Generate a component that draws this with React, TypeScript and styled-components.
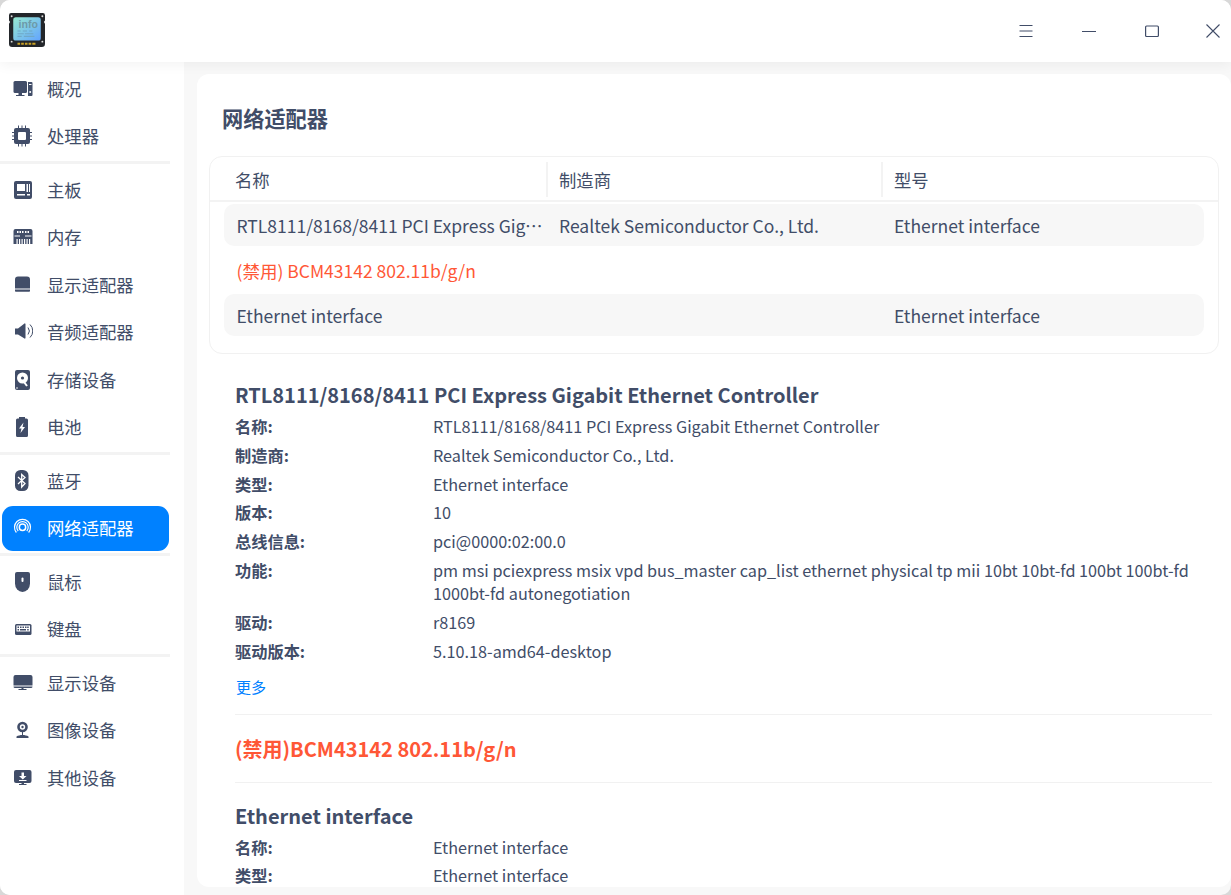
import React from 'react'
import styled, { createGlobalStyle } from 'styled-components'

const INK = '#414d68'
const BLUE = '#0081ff'
const RED = '#ff5736'

const GlobalStyle = createGlobalStyle`
  html, body {
    margin: 0;
    padding: 0;
    background: #d8d8d8;
  }
  * {
    box-sizing: border-box;
  }
`

const Window = styled.div`
  width: 1231px;
  height: 895px;
  display: flex;
  flex-direction: column;
  overflow: hidden;
  border-radius: 10px;
  background: #f8f8f8;
  color: ${INK};
  font-family: 'Noto Sans CJK SC', 'Noto Sans', sans-serif;
`

const TitleBar = styled.header`
  flex: 0 0 62px;
  display: flex;
  align-items: center;
  justify-content: space-between;
  padding: 0 0 0 9px;
  background: #fff;
  position: relative;
  z-index: 2;
  box-shadow: 0 3px 12px rgba(0, 0, 0, 0.05);
`

const LogoSvg = styled.svg`
  display: block;
  width: 36px;
  height: 34px;
  margin-bottom: 2px;
`

const WindowButtons = styled.div`
  display: flex;
  align-items: center;
  gap: 27px;
`

const WindowButton = styled.button`
  width: 36px;
  height: 50px;
  padding: 0;
  border: 0;
  background: none;
  color: ${INK};
  display: flex;
  align-items: center;
  justify-content: center;
`

const CloseButton = styled(WindowButton)`
  margin-left: -2px;
`

const Body = styled.div`
  flex: 1;
  min-height: 0;
  display: flex;
`

const Sidebar = styled.nav`
  flex: 0 0 184px;
  display: flex;
  flex-direction: column;
  background: #fff;
  padding-top: 2.75px;
`

const NavDivider = styled.div`
  flex: none;
  width: 170px;
  height: 2.5px;
  margin: 1.25px 0 2.25px;
  background: #f3f3f3;
`

const NavItem = styled.div<{ $active?: boolean }>`
  flex: none;
  height: 45px;
  margin: 1.25px 15px 1.25px 2px;
  padding-left: 9px;
  display: flex;
  align-items: center;
  gap: 14px;
  border-radius: 11px;
  font-size: 17.33px;
  line-height: 24px;
  background: ${({ $active }) => ($active ? BLUE : 'transparent')};
  color: ${({ $active }) => ($active ? '#fff' : INK)};
`

const IconSvg = styled.svg`
  flex: none;
  width: 22px;
  height: 22px;
  display: block;
`

const Main = styled.main`
  flex: 1;
  min-width: 0;
  margin: 12px 0 8px 13px;
  background: #fff;
  border-radius: 12px;
  padding: 0 12px;
  overflow: hidden;
`

const PageTitle = styled.h1`
  margin: 0;
  padding: 28px 0 0 13px;
  height: 82px;
  font-size: 21.2px;
  line-height: 32px;
  font-weight: 700;
`

const TableCard = styled.section`
  height: 198px;
  border: 1.5px solid #f1f1f1;
  border-radius: 13px;
`

const HeaderRow = styled.div`
  height: 45px;
  display: grid;
  grid-template-columns: 324px 335px 1fr;
  padding: 5px 0 3px 14px;
  border-bottom: 2px solid #f3f3f3;
  font-size: 17.33px;
  line-height: 24px;
`

const HeaderCell = styled.div<{ $last?: boolean }>`
  padding-left: 11px;
  display: flex;
  align-items: center;
  border-right: 2px solid ${({ $last }) => ($last ? 'transparent' : '#f3f3f3')};
`

const TableRows = styled.div`
  display: flex;
  flex-direction: column;
  gap: 3px;
  padding: 2px 14px 0;
`

const TableRow = styled.div<{ $shaded?: boolean; $disabled?: boolean }>`
  height: 42px;
  padding-top: 2px;
  display: grid;
  grid-template-columns: 323px 335px 1fr;
  align-items: center;
  border-radius: 10px;
  font-size: 17.5px;
  line-height: 24px;
  background: ${({ $shaded }) => ($shaded ? '#f7f7f7' : 'transparent')};
  color: ${({ $disabled }) => ($disabled ? RED : INK)};
`

const TableCell = styled.div`
  padding: 0 2px 0 12px;
  white-space: nowrap;
  overflow: hidden;
  text-overflow: ellipsis;

  &:first-child {
    padding-left: 12.5px;
  }
`

const Details = styled.div`
  padding: 0 7px 0 26px;
`

const DeviceBlock = styled.section<{ $divided?: boolean }>`
  border-bottom: ${({ $divided }) => ($divided ? '1px solid #f1f1f1' : '0')};
`

const DeviceTitle = styled.h2<{ $disabled?: boolean }>`
  margin: 0;
  font-size: 20px;
  line-height: 30px;
  font-weight: 700;
  color: ${({ $disabled }) => ($disabled ? RED : INK)};
`

const FirstTitle = styled(DeviceTitle)`
  margin-top: 26px;
`

const PropertyList = styled.dl`
  margin: 5px 0 0;
  display: grid;
  grid-template-columns: 198px 1fr;
  row-gap: 5.8px;
  font-size: 16.23px;
  line-height: 23px;
`

const PropertyName = styled.dt`
  font-weight: 700;
`

const PropertyValue = styled.dd`
  margin: 0;
`

const MoreLink = styled.a`
  display: block;
  margin: 13px 0 0 1px;
  padding-bottom: 16px;
  font-size: 15px;
  line-height: 22px;
  color: ${BLUE};
`

const DisabledSection = styled(DeviceBlock)`
  padding: 19px 0 18px;
`

const LastSection = styled.section`
  padding-top: 18px;
`

const navGroups: { label: string; icon: React.ReactNode; active?: boolean }[][] = [
  [
    {
      label: '概况',
      icon: (
        <>
          <path d="M4 3h10.5a1.5 1.5 0 0 1 1.5 1.5v9a1.5 1.5 0 0 1-1.5 1.5H4a1.5 1.5 0 0 1-1.5-1.5v-9A1.5 1.5 0 0 1 4 3z" />
          <path d="M7.5 15H11v2h2.500v1H5v-1h2.500z" />
          <path d="M17 4h3.500a1 1 0 0 1 1 1v12a1 1 0 0 1-1 1H17z" />
          <rect x="18" y="6" width="2.5" height="1" fill="#fff" />
          <circle cx="19.2" cy="14" r="1" fill="#fff" />
        </>
      ),
    },
    {
      label: '处理器',
      icon: (
        <>
          <path d="M5 3h12a2 2 0 0 1 2 2v12a2 2 0 0 1-2 2H5a2 2 0 0 1-2-2V5a2 2 0 0 1 2-2z" />
          <rect x="7" y="7" width="8" height="8" rx="1" fill="#fff" />
          <path d="M7 .5h1v3H7zM10.5 .5h1v3h-1zM14 .5h1v3h-1zM7 18.5h1v3H7zM10.5 18.5h1v3h-1zM14 18.5h1v3h-1zM1 7h3v1H1zM1 10.5h3v1H1zM1 14h3v1H1zM18 7h3v1h-3zM18 10.5h3v1h-3zM18 14h3v1h-3z" />
        </>
      ),
    },
  ],
  [
    {
      label: '主板',
      icon: (
        <>
          <rect x="3" y="2" width="18" height="18" rx="2" />
          <rect x="6" y="5" width="8" height="7" fill="#fff" />
          <rect x="15.5" y="5" width="1.5" height="8" fill="#fff" />
          <rect x="18" y="5" width="1" height="8" fill="#fff" />
          <rect x="6" y="15" width="8" height="1.5" fill="#fff" />
          <rect x="16" y="15" width="3" height="1.5" fill="#fff" />
        </>
      ),
    },
    {
      label: '内存',
      icon: (
        <>
          <path d="M4.500 3h15a2 2 0 0 1 2 2v13h-19V5a2 2 0 0 1 2-2z" />
          <path d="M6 5h1.500v2H6zM8.500 5H10v2H8.500zM11 5h1.500v2H11zM14 5h1.500v2H14zM16.500 5H18v2h-1.500zM3.500 9.500H9v1H3.500zM14 9.500h6.500v1H14z" fill="#fff" />
          <path d="M5.500 13h1.200v5H5.500zM8 13h1.200v5H8zM10.500 13h1.200v5h-1.200zM13 13h1.200v5H13zM15.500 13h1.200v5h-1.200zM18 13h1.200v5H18z" fill="#fff" />
        </>
      ),
    },
    {
      label: '显示适配器',
      icon: (
        <>
          <path d="M7 2.500h9a3 3 0 0 1 3 3V14.500H4V5.500a3 3 0 0 1 3-3z" />
          <path d="M4 15.500h15V17a.8.8 0 0 1-.8.8H4.800A.8.8 0 0 1 4 17z" />
        </>
      ),
    },
    {
      label: '音频适配器',
      icon: (
        <>
          <path d="M4 7.500h3l6.500-5a.6.6 0 0 1 1 .4v14.200a.6.6 0 0 1-1 .4L7 13.500H4z" />
          <path d="M17 6.500a5.500 5.500 0 0 1 0 7" fill="none" stroke={INK} strokeWidth="1" />
          <path d="M19 3.500a9 9 0 0 1 0 13" fill="none" stroke={INK} strokeWidth="1" />
        </>
      ),
    },
    {
      label: '存储设备',
      icon: (
        <>
          <rect x="4" y="1" width="15" height="20" rx="2" />
          <circle cx="11.5" cy="9" r="5.5" fill="#fff" />
          <circle cx="11.5" cy="9" r="1.6" />
          <path d="M13 13l3 4" stroke="#fff" strokeWidth="2" />
          <circle cx="6" cy="19" r=".8" fill="#fff" />
        </>
      ),
    },
    {
      label: '电池',
      icon: (
        <>
          <path d="M8 1h6v1.500h1.500A1.500 1.500 0 0 1 17 4v15.500a1.500 1.500 0 0 1-1.500 1.500h-9A1.500 1.500 0 0 1 5 19.500V4a1.500 1.500 0 0 1 1.500-1.500H8z" />
          <path d="M12.500 6.500L8 12.500h2.500L9.500 17l4.500-6h-2.500z" fill="#fff" />
        </>
      ),
    },
  ],
  [
    {
      label: '蓝牙',
      icon: (
        <>
          <rect x="4" y="0" width="13.5" height="21" rx="5.5" />
          <path d="M7 7l7 6.500-3.300 3.500V4.500L14 7.500 7 14" fill="none" stroke="#fff" strokeWidth="1.3" />
        </>
      ),
    },
    {
      label: '网络适配器',
      active: true,
      icon: (
        <>
          <path d="M5.400 15.500a8 8 0 1 1 12.200 0" fill="none" stroke="#fff" strokeWidth="1.2" />
          <path d="M7.200 14a5.700 5.700 0 1 1 8.600 0" fill="none" stroke="#fff" strokeWidth="1.2" />
          <circle cx="11.500" cy="10.200" r="3.200" fill="none" stroke="#fff" strokeWidth="1.500" />
        </>
      ),
    },
  ],
  [
    {
      label: '鼠标',
      icon: (
        <>
          <path d="M6 1h11a2 2 0 0 1 2 2v9.500a7.500 8.500 0 0 1-15 0V3a2 2 0 0 1 2-2z" />
          <rect x="10.500" y="6.500" width="2" height="4.500" rx="1" fill="#fff" />
        </>
      ),
    },
    {
      label: '键盘',
      icon: (
        <>
          <rect x="4" y="6" width="16.500" height="11" rx="1.500" />
          <rect x="5.500" y="7.500" width="13.500" height="6" fill="#fff" />
          <path d="M6.500 8.500h1.500V10H6.500zM9 8.500h1.500V10H9zM11.500 8.500h1.500V10h-1.500zM14 8.500h1.500V10H14zM16.200 8.500h1.500V10h-1.500zM6.500 11h1.500v1.500H6.500zM9 11h6v1.500H9zM16.200 11h1.500v1.500h-1.500z" />
        </>
      ),
    },
  ],
  [
    {
      label: '显示设备',
      icon: (
        <>
          <path d="M4.500 3h15a2 2 0 0 1 2 2v8.500h-19V5a2 2 0 0 1 2-2z" />
          <path d="M2.500 14.500h19a1.500 1.500 0 0 1-1.500 1.500H4a1.500 1.500 0 0 1-1.500-1.500z" />
          <path d="M10.500 16h2v1h3v1h-8v-1h3z" />
        </>
      ),
    },
    {
      label: '图像设备',
      icon: (
        <>
          <circle cx="11.500" cy="8" r="5.300" />
          <circle cx="11.500" cy="8" r="2.700" fill="#fff" />
          <circle cx="11.500" cy="8" r="1.200" />
          <path d="M11 13h1v3.500h-1z" />
          <path d="M5.500 17.500c3-2 9-2 12 0v1.500h-12z" />
        </>
      ),
    },
    {
      label: '其他设备',
      icon: (
        <>
          <path d="M5 3h13.500a2 2 0 0 1 2 2v9a2 2 0 0 1-2 2H5a2 2 0 0 1-2-2V5a2 2 0 0 1 2-2z" />
          <path d="M10.500 5.500H13V9h2.500l-3.700 3.500L8 9h2.500z" fill="#fff" />
          <rect x="8" y="13" width="7.500" height="1" fill="#fff" />
          <path d="M10.500 16H13v1h2.500v1H8v-1h2.500z" />
        </>
      ),
    },
  ],
]

const AppLogoText = styled.text`
  font-family: 'Liberation Sans', sans-serif;
  font-size: 10px;
  font-weight: 700;
  fill: #6d9aa8;
`

const AppLogo = () => (
  <LogoSvg viewBox="1 1 34 32" aria-hidden="true">
    <defs>
      <linearGradient id="logoScreen" x1="0" y1="0" x2="1" y2="1">
        <stop offset="0" stopColor="#98ead0" />
        <stop offset="1" stopColor="#62a4ff" />
      </linearGradient>
    </defs>
    <path d="M3 1h30a2 2 0 0 1 2 2v5a2 2 0 0 0 0 3v19a3 3 0 0 1-3 3H4a3 3 0 0 1-3-3V11a2 2 0 0 0 0-3V3a2 2 0 0 1 2-2z" fill="#23262a" />
    <rect x="5" y="5" width="26" height="22" rx="2.5" fill="url(#logoScreen)" />
    <AppLogoText x="10" y="15">info</AppLogoText>
    <path d="M9 17.500h3v1H9zM14 17.500h4v1h-4zM20 17.500h3v1h-3zM9 20h6v1H9zM16 20h8v1h-8zM9 22.500h4v1H9zM15 22.500h10v1H15z" fill="#6fa8c8" />
    <path d="M9 29h2.500v2H9zM12.500 29H15v2h-2.500zM16 29h2.500v2H16zM19.500 29H22v2h-2.500zM23 29h3v2h-3z" fill="#c9a227" />
    <circle cx="3.500" cy="4" r=".9" fill="#ddd" />
    <circle cx="32.500" cy="4" r=".9" fill="#ddd" />
    <circle cx="3.500" cy="28" r=".9" fill="#ddd" />
    <circle cx="32.500" cy="28" r=".9" fill="#ddd" />
  </LogoSvg>
)

const NavIcon = ({ children, active }: { children: React.ReactNode; active?: boolean }) => (
  <IconSvg viewBox="0 0 22 22" fill={active ? '#fff' : INK} aria-hidden="true">
    {children}
  </IconSvg>
)

const properties: [string, string][] = [
  ['名称:', 'RTL8111/8168/8411 PCI Express Gigabit Ethernet Controller'],
  ['制造商:', 'Realtek Semiconductor Co., Ltd.'],
  ['类型:', 'Ethernet interface'],
  ['版本:', '10'],
  ['总线信息:', 'pci@0000:02:00.0'],
  ['功能:', 'pm msi pciexpress msix vpd bus_master cap_list ethernet physical tp mii 10bt 10bt-fd 100bt 100bt-fd 1000bt-fd autonegotiation'],
  ['驱动:', 'r8169'],
  ['驱动版本:', '5.10.18-amd64-desktop'],
]

const PropertyRows = ({ rows }: { rows: [string, string][] }) => (
  <PropertyList>
    {rows.map(([name, value]) => (
      <React.Fragment key={name}>
        <PropertyName>{name}</PropertyName>
        <PropertyValue>{value}</PropertyValue>
      </React.Fragment>
    ))}
  </PropertyList>
)

export default function App() {
  return (
    <>
      <GlobalStyle />
      <Window>
        <TitleBar>
          <AppLogo />
          <WindowButtons>
            <WindowButton aria-label="menu">
              <svg width="16" height="16" viewBox="0 0 16 16" fill="none" stroke="currentColor" strokeWidth="1">
                <path d="M1.500 2.500h13M1.500 8h13M1.500 13.500h13" />
              </svg>
            </WindowButton>
            <WindowButton aria-label="minimize">
              <svg width="16" height="16" viewBox="0 0 16 16" fill="none" stroke="currentColor" strokeWidth="1.1">
                <path d="M1 8.500h14" />
              </svg>
            </WindowButton>
            <WindowButton aria-label="maximize">
              <svg width="16" height="16" viewBox="0 0 16 16" fill="none" stroke="currentColor" strokeWidth="1.2">
                <rect x="1.600" y="3" width="12.800" height="10.500" rx="1" />
              </svg>
            </WindowButton>
            <CloseButton aria-label="close">
              <svg width="16" height="16" viewBox="0 0 16 16" fill="none" stroke="currentColor" strokeWidth="1.1">
                <path d="M1.500 1.500l13 13M14.500 1.500l-13 13" />
              </svg>
            </CloseButton>
          </WindowButtons>
        </TitleBar>
        <Body>
          <Sidebar>
            {navGroups.map((group, index) => (
              <React.Fragment key={group[0].label}>
                {index > 0 && <NavDivider />}
                {group.map((item) => (
                  <NavItem key={item.label} $active={item.active}>
                    <NavIcon active={item.active}>{item.icon}</NavIcon>
                    {item.label}
                  </NavItem>
                ))}
              </React.Fragment>
            ))}
          </Sidebar>
          <Main>
            <PageTitle>网络适配器</PageTitle>
            <TableCard>
              <HeaderRow>
                <HeaderCell>名称</HeaderCell>
                <HeaderCell>制造商</HeaderCell>
                <HeaderCell $last>型号</HeaderCell>
              </HeaderRow>
              <TableRows>
                <TableRow $shaded>
                  <TableCell>RTL8111/8168/8411 PCI Express Gigabit Ethernet Controller</TableCell>
                  <TableCell>Realtek Semiconductor Co., Ltd.</TableCell>
                  <TableCell>Ethernet interface</TableCell>
                </TableRow>
                <TableRow $disabled>
                  <TableCell>(禁用) BCM43142 802.11b/g/n</TableCell>
                  <TableCell />
                  <TableCell />
                </TableRow>
                <TableRow $shaded>
                  <TableCell>Ethernet interface</TableCell>
                  <TableCell />
                  <TableCell>Ethernet interface</TableCell>
                </TableRow>
              </TableRows>
            </TableCard>
            <Details>
              <DeviceBlock $divided>
                <FirstTitle>RTL8111/8168/8411 PCI Express Gigabit Ethernet Controller</FirstTitle>
                <PropertyRows rows={properties} />
                <MoreLink>更多</MoreLink>
              </DeviceBlock>
              <DisabledSection $divided>
                <DeviceTitle $disabled>(禁用)BCM43142 802.11b/g/n</DeviceTitle>
              </DisabledSection>
              <LastSection>
                <DeviceTitle>Ethernet interface</DeviceTitle>
                <PropertyRows
                  rows={[
                    ['名称:', 'Ethernet interface'],
                    ['类型:', 'Ethernet interface'],
                  ]}
                />
              </LastSection>
            </Details>
          </Main>
        </Body>
      </Window>
    </>
  )
}
